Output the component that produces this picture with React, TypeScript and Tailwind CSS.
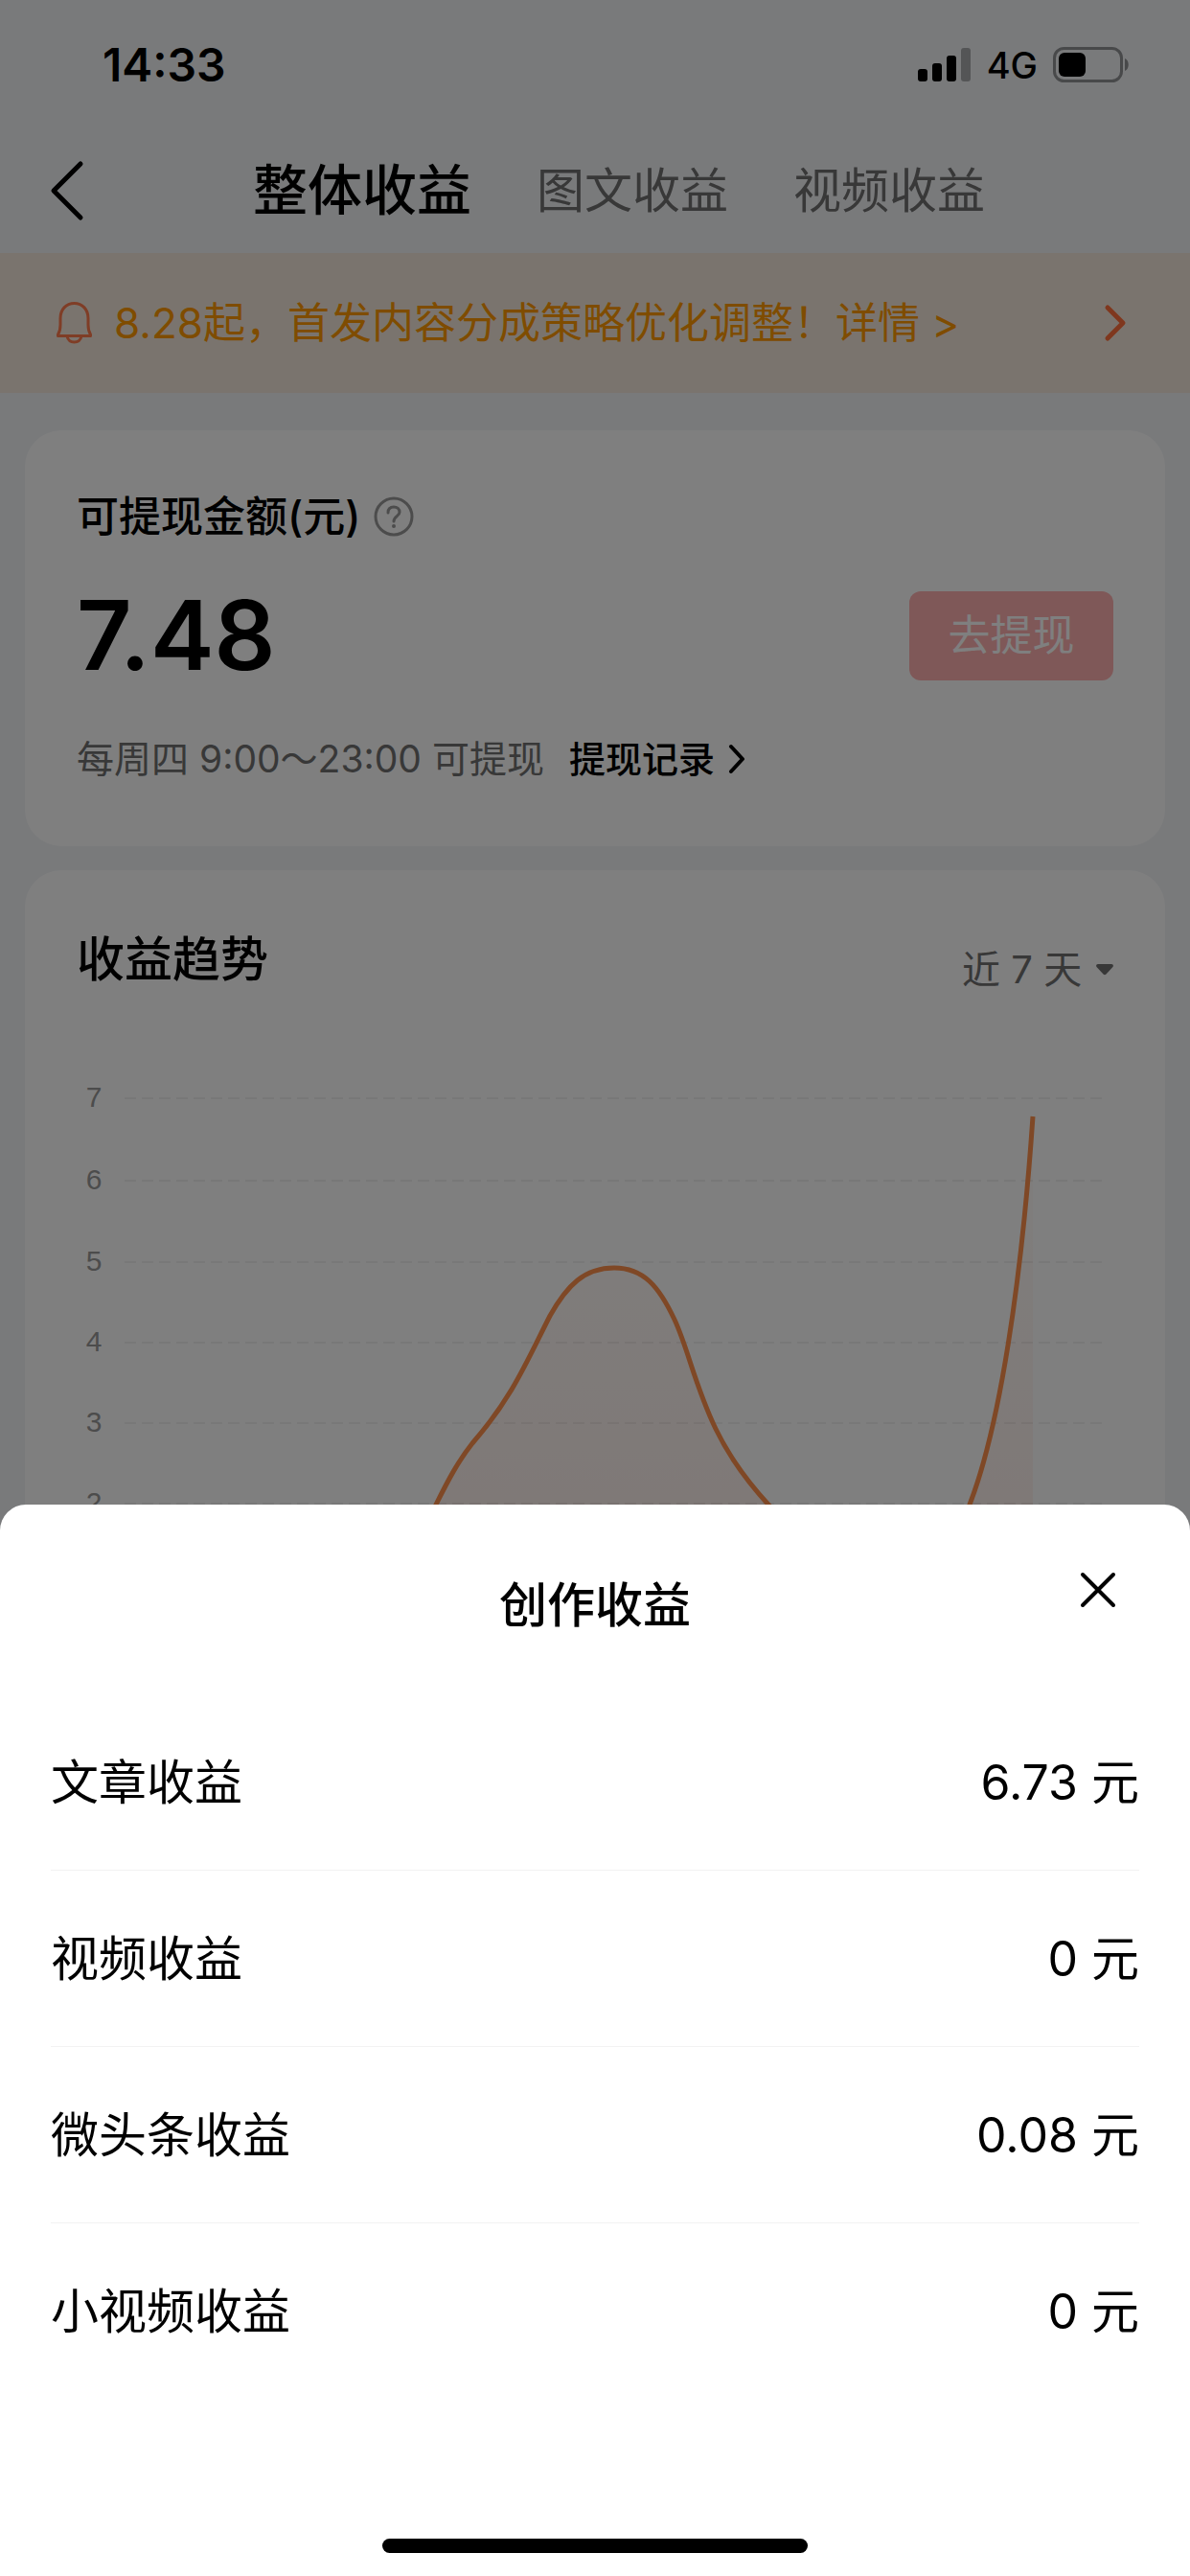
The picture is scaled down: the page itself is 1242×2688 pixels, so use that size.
import { useState } from "react";

type TabKey = "ALL" | "ARTICLE" | "VIDEO";

interface IncomeItem {
  label: string;
  amount: string;
}

const TABS: { key: TabKey; label: string }[] = [
  { key: "ALL", label: "整体收益" },
  { key: "ARTICLE", label: "图文收益" },
  { key: "VIDEO", label: "视频收益" },
];

const INCOME_ITEMS: IncomeItem[] = [
  { label: "文章收益", amount: "6.73" },
  { label: "视频收益", amount: "0" },
  { label: "微头条收益", amount: "0.08" },
  { label: "小视频收益", amount: "0" },
];

const TICKS = [
  { value: 7, y: 46 },
  { value: 6, y: 132 },
  { value: 5, y: 217 },
  { value: 4, y: 301 },
  { value: 3, y: 385 },
  { value: 2, y: 469 },
  { value: 1, y: 554 },
  { value: 0, y: 638 },
];

const TREND_LINE =
  "M124 610 C260 610 340 540 375 470 C388 444 398 425 413 406 C455 358 470 320 494 273 C512 241 530 223 561 223 C592 223 608 243 624 277 C638 307 645 345 667 391 C682 422 700 446 722 470 C760 510 800 560 852 560 C890 560 915 520 932 470 C963 390 986 240 998 65";

export default function App() {
  const [tab, setTab] = useState<TabKey>("ALL");
  const [sheetOpen, setSheetOpen] = useState(true);

  return (
    <div className="min-h-screen bg-[#f2f4f7] font-['Inter','Noto_Sans_CJK_SC',sans-serif] text-black">
      <StatusBar />
      <nav className="flex h-[128px] items-center pb-[2px] pl-[50px]">
        <button type="button" aria-label="返回" className="mr-[174px]">
          <svg width="40" height="64" viewBox="0 0 40 64" fill="none" stroke="currentColor" strokeWidth="5" strokeLinecap="round" strokeLinejoin="round">
            <path d="M34 4 L6 32 L34 60" />
          </svg>
        </button>
        <div className="flex items-center gap-[68px] whitespace-nowrap">
          {TABS.map((item) => (
            <button
              key={item.key}
              type="button"
              onClick={() => setTab(item.key)}
              className={item.key === tab ? "text-[57px] leading-[72px] font-medium" : "text-[50px] leading-[72px] text-[#707070]"}
            >
              {item.label}
            </button>
          ))}
        </div>
      </nav>

      <a href="#notice" className="flex h-[146px] items-center bg-[#f5e9dc] pr-[64px] pl-[58px] text-[44px] text-[#ff9900]">
        <BellIcon />
        <span className="ml-[22px] flex-1 leading-[60px]">8.28起，首发内容分成策略优化调整！详情 &gt;</span>
        <svg width="28" height="40" viewBox="0 0 28 40" fill="none" stroke="#ff6f3c" strokeWidth="5" strokeLinecap="round" strokeLinejoin="round">
          <path d="M6 4 L22 20 L6 36" />
        </svg>
      </a>

      <main className="flex flex-col gap-[25px] px-[26px] pt-[39px]">
        <BalanceCard />
        <TrendCard />
      </main>

      {sheetOpen && <IncomeSheet onClose={() => setSheetOpen(false)} />}
    </div>
  );
}

function StatusBar() {
  return (
    <header className="flex h-[136px] items-center justify-between pr-[63px] pl-[107px]">
      <span className="text-[48px] leading-[60px] font-semibold">14:33</span>
      <div className="flex items-center">
        <svg width="56" height="36" viewBox="0 0 56 36">
          <rect x="0" y="22" width="10" height="13" rx="3" />
          <rect x="15" y="16" width="10" height="19" rx="3" />
          <rect x="30" y="8" width="10" height="27" rx="3" />
          <rect x="45" y="0" width="10" height="35" rx="3" fillOpacity="0.3" />
        </svg>
        <span className="ml-[16px] text-[38px] leading-[48px] font-medium">4G</span>
        <svg className="ml-[16px]" width="80" height="38" viewBox="0 0 80 38">
          <rect x="1.5" y="1.5" width="70" height="34" rx="10" fill="none" stroke="#000" strokeOpacity="0.4" strokeWidth="3" />
          <rect x="6" y="6" width="28" height="25" rx="6" />
          <path d="M75 12 C80 14 80 23 75 25 Z" fillOpacity="0.4" />
        </svg>
      </div>
    </header>
  );
}

function BellIcon() {
  return (
    <svg width="39" height="46" viewBox="0 0 39 46" fill="none" stroke="#ff7a4d" strokeWidth="3" strokeLinejoin="round">
      <path d="M2.5 36.5 V35 C4.5 32 5 29 5 25 V18 C5 9 11 2.5 19.500 2.500 C28 2.500 34 9 34 18 V25 C34 29 34.500 32 36.500 35 V36.500 Z" />
      <path d="M12 37 C13 41 16 43 19.500 43 C23 43 26 41 27 37" />
    </svg>
  );
}

function BalanceCard() {
  return (
    <section className="rounded-[38px] bg-white px-[54px] pt-[58px] pb-[64px]">
      <div className="flex items-center">
        <h2 className="text-[44px] leading-[64px] font-medium">可提现金额(元)</h2>
        <button type="button" aria-label="说明" className="ml-[14px]">
          <svg width="42" height="42" viewBox="0 0 42 42" fill="none" stroke="#999999" strokeWidth="3" strokeLinecap="round">
            <circle cx="21" cy="21" r="19" />
            <path d="M15 17 C15 13 17.500 11 21 11 C24.500 11 27 13 27 16.500 C27 20.500 21 21 21 26" />
            <circle cx="21" cy="31" r="1" fill="#999999" strokeWidth="2" />
          </svg>
        </button>
      </div>
      <div className="mt-[33px] flex items-center justify-between">
        <span className="text-[100px] leading-[118px] font-semibold">7.48</span>
        <button type="button" className="h-[93px] w-[213px] rounded-[12px] bg-[#ffb0b0] text-[44px] leading-[60px] text-white">
          去提现
        </button>
      </div>
      <div className="mt-[43px] flex items-center text-[38px] leading-[54px]">
        <span className="text-[39px] text-[#707070]">每周四 9:00～23:00 可提现</span>
        <a href="#records" className="ml-[26px] flex items-center font-medium">
          提现记录
          <svg className="ml-[12px]" width="22" height="34" viewBox="0 0 22 34" fill="none" stroke="currentColor" strokeWidth="4" strokeLinecap="round" strokeLinejoin="round">
            <path d="M5 4 L17 17 L5 30" />
          </svg>
        </a>
      </div>
    </section>
  );
}

function TrendCard() {
  return (
    <section className="rounded-[38px] bg-white px-[54px] pt-[58px] pb-[54px]">
      <div className="flex items-end justify-between">
        <h2 className="text-[50px] leading-[70px] font-medium">收益趋势</h2>
        <label className="flex items-center text-[#707070]">
          <select aria-label="时间范围" className="appearance-none bg-transparent text-[40px] leading-[48px]">
            <option>近 7 天</option>
          </select>
          <svg className="ml-[14px]" width="18" height="12" viewBox="0 0 18 12" fill="currentColor">
            <path d="M2 0 H16 C18 0 18.500 2 17 3.500 L10.500 10.500 C9.500 11.500 8.500 11.500 7.500 10.500 L1 3.500 C-0.500 2 0 0 2 0 Z" />
          </svg>
        </label>
      </div>
      <svg className="mt-[64px] h-auto w-full" viewBox="0 0 1082 700">
        <defs>
          <linearGradient id="trendFill" gradientUnits="userSpaceOnUse" x1="0" y1="65" x2="0" y2="638">
            <stop offset="0" stopColor="#ff8a4c" stopOpacity="0.02" />
            <stop offset="1" stopColor="#ff6a4c" stopOpacity="0.12" />
          </linearGradient>
        </defs>
        {TICKS.map((tick) => (
          <g key={tick.value}>
            <text x="18" y={tick.y + 9} textAnchor="middle" className="fill-[#999999] font-['Liberation_Sans',sans-serif] text-[30px]">
              {tick.value}
            </text>
            <line x1="50" x2="1071" y1={tick.y} y2={tick.y} stroke="#f0f0f0" strokeWidth="2" strokeDasharray="12 6" />
          </g>
        ))}
        <path d={`${TREND_LINE} V638 H124 Z`} fill="url(#trendFill)" />
        <path d={TREND_LINE} fill="none" stroke="#ff904c" strokeWidth="5" />
      </svg>
    </section>
  );
}

function IncomeSheet({ onClose }: { onClose: () => void }) {
  return (
    <div className="fixed inset-0 flex flex-col justify-end bg-black/50">
      <div role="dialog" aria-labelledby="sheet-title" className="rounded-t-[27px] bg-white px-[53px] pt-[70px] pb-[24px]">
        <div className="grid grid-cols-[1fr_auto_1fr] items-start">
          <h2 id="sheet-title" className="col-start-2 text-[50px] leading-[70px] font-medium">
            创作收益
          </h2>
          <button type="button" aria-label="关闭" onClick={onClose} className="mr-[24px] justify-self-end">
            <svg width="38" height="38" viewBox="0 0 38 38" fill="none" stroke="currentColor" strokeWidth="4" strokeLinecap="round">
              <path d="M3 3 L35 35 M35 3 L3 35" />
            </svg>
          </button>
        </div>
        <dl className="mt-[58px] text-[50px] leading-[70px]">
          {INCOME_ITEMS.map((item) => (
            <div key={item.label} className="flex h-[184px] items-center justify-between border-b border-[#f2f2f2] last:border-transparent">
              <dt>{item.label}</dt>
              <dd>{item.amount} 元</dd>
            </div>
          ))}
        </dl>
        <div className="mx-auto mt-[145px] h-[15px] w-[444px] rounded-full bg-black" />
      </div>
    </div>
  );
}
